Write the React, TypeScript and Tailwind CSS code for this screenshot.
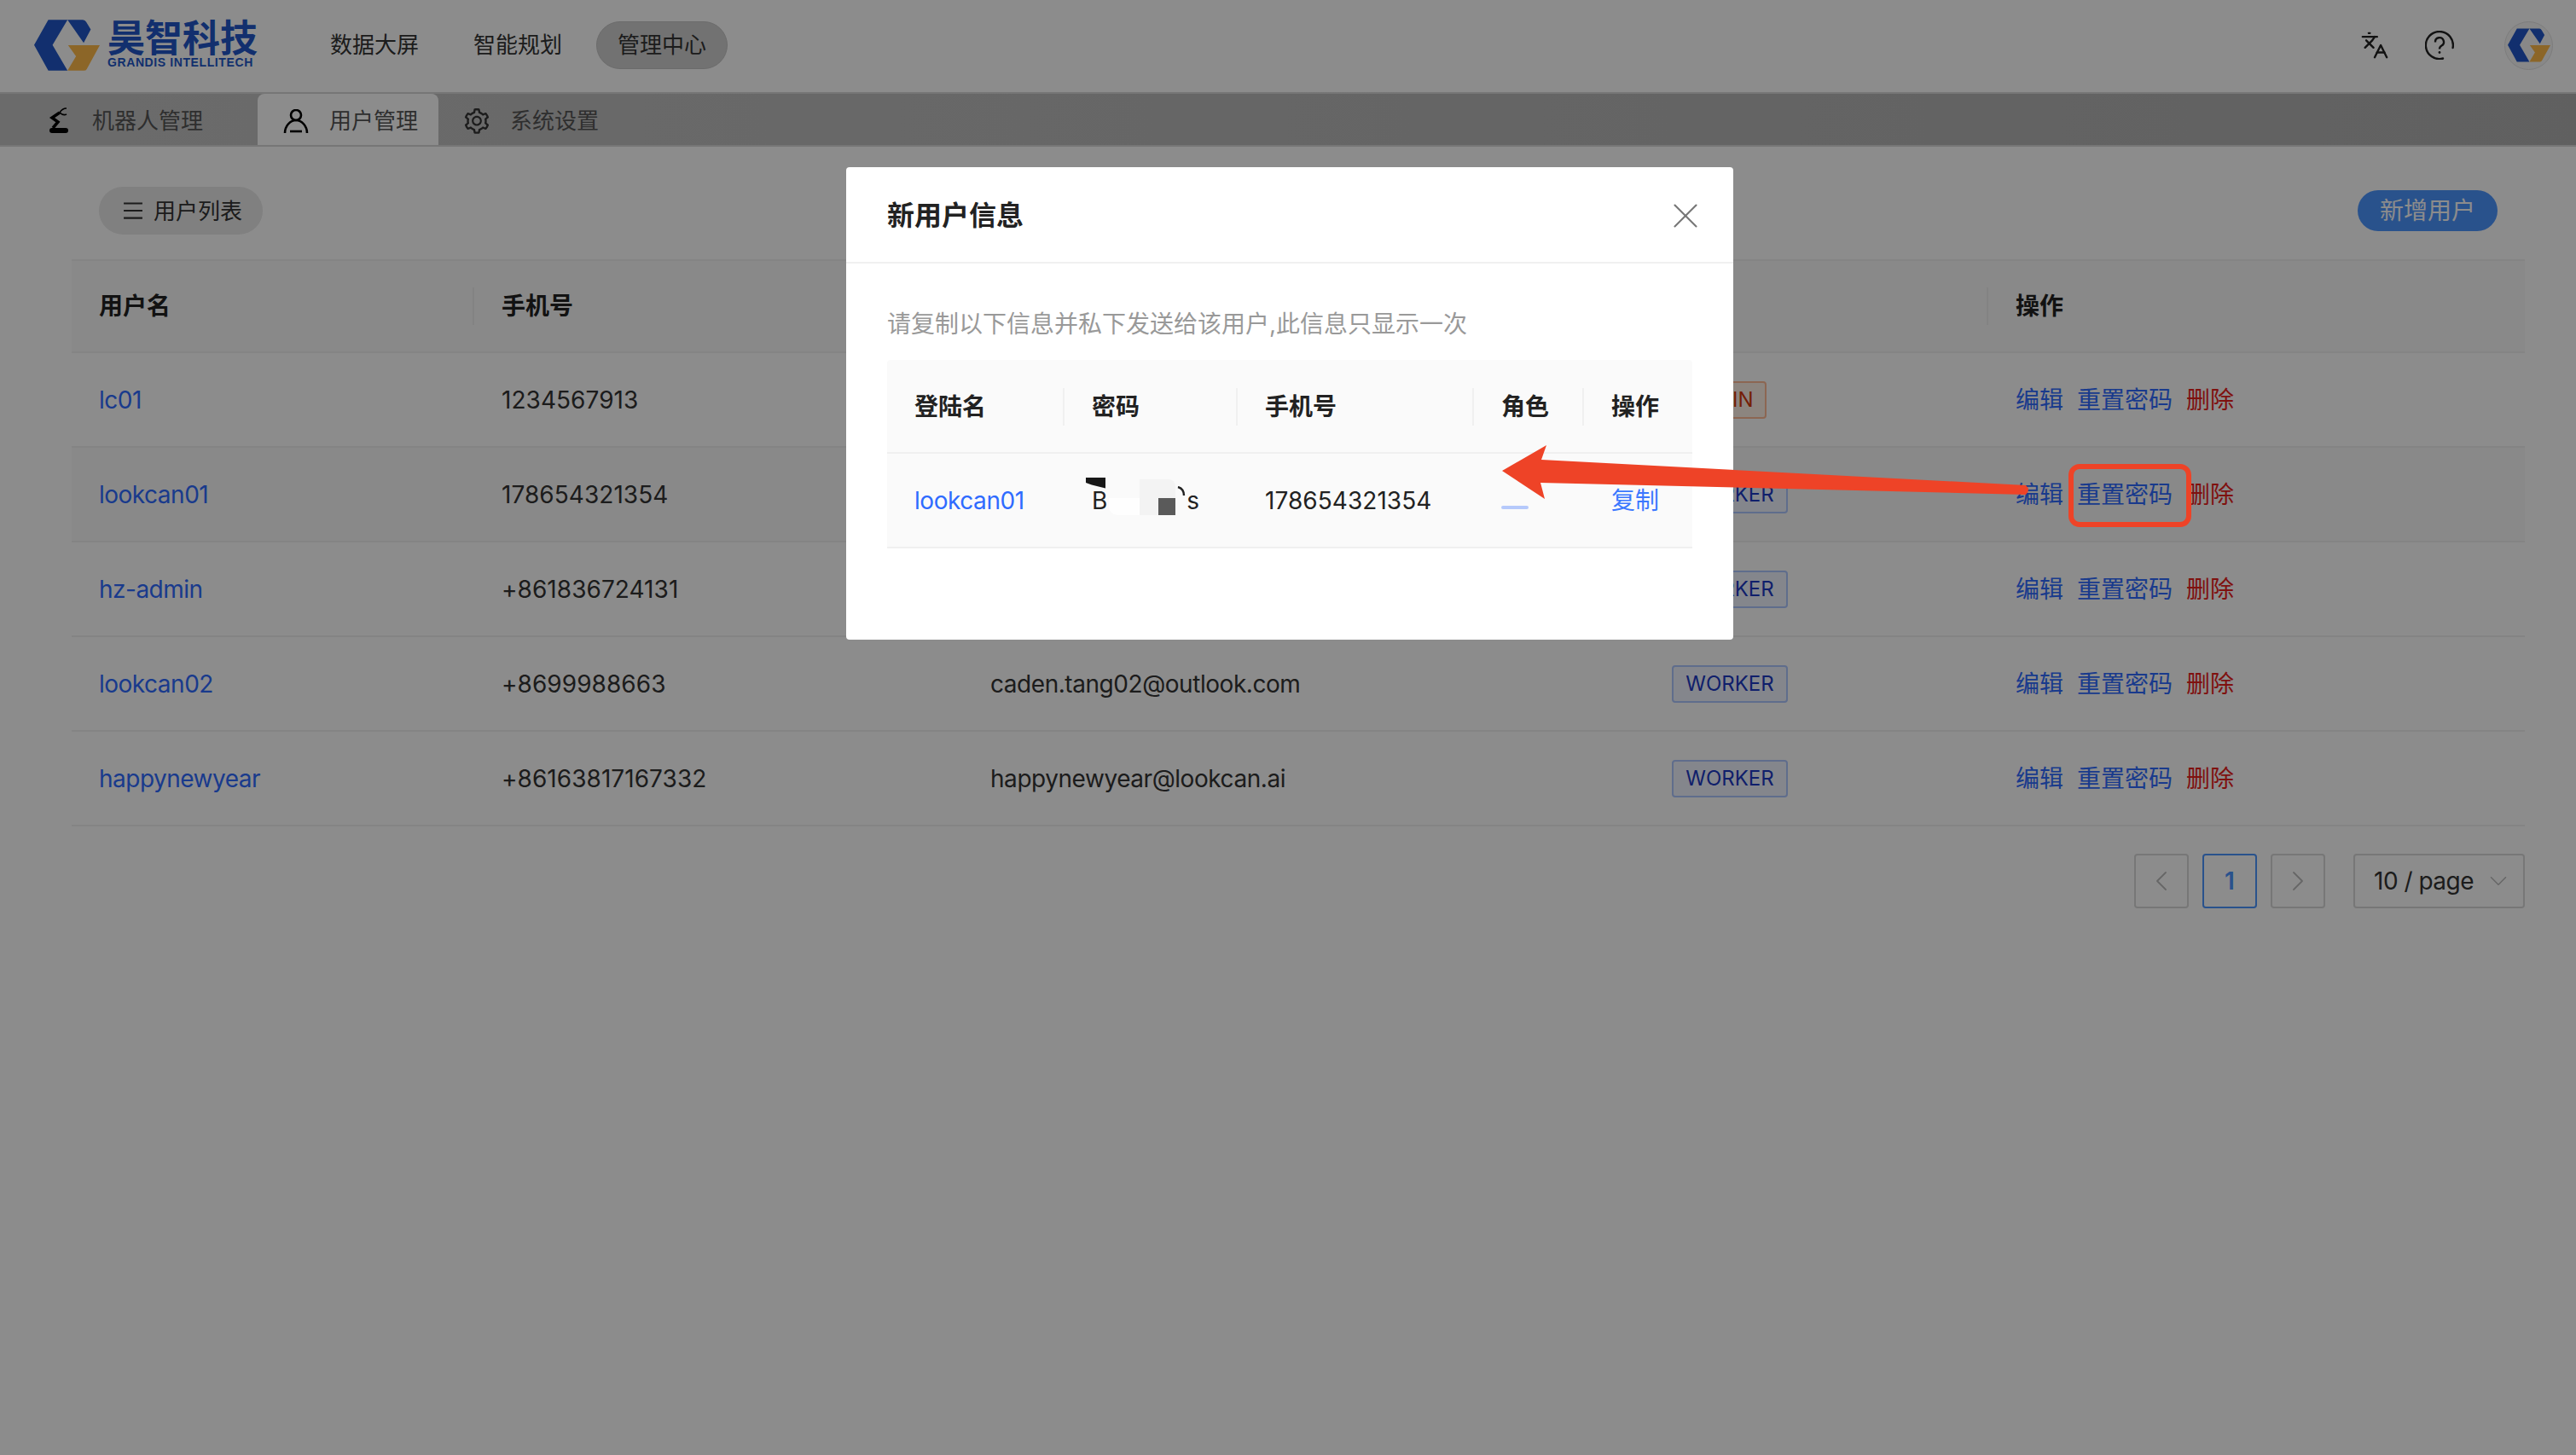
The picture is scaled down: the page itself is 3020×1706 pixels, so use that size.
import { AiOutlineMenu, AiOutlineSetting } from "react-icons/ai";
import { ChevronDown, ChevronLeft, ChevronRight, Languages, X } from "lucide-react";

const font = "font-['Inter','Noto_Sans_CJK_SC',sans-serif]";

const users = [
    { name: "lc01", phone: "1234567913", email: "lc01@lookcan.ai", role: "ADMIN" },
    { name: "lookcan01", phone: "178654321354", email: "lookcan01@lookcan.ai", role: "WORKER" },
    { name: "hz-admin", phone: "+861836724131", email: "hz-admin@lookcan.ai", role: "WORKER" },
    { name: "lookcan02", phone: "+8699988663", email: "caden.tang02@outlook.com", role: "WORKER" },
    { name: "happynewyear", phone: "+86163817167332", email: "happynewyear@lookcan.ai", role: "WORKER" },
];

function LogoMark({ className }: { className?: string }) {
    return (
        <svg viewBox="0 0 232 180" className={className}>
            <path d="M50 0H118L65 89L118 180H50L0 89Z" fill="#2157c8" />
            <path d="M118 0H172Q180 0 184 8L200 34L175 82Z" fill="#2157c8" />
            <path d="M120 90H232L186 174Q183 180 176 180H118L148 129Z" fill="#ffbb49" />
        </svg>
    );
}

function RobotIcon() {
    return (
        <svg viewBox="0 0 24 32" className="w-[24px] h-[32px]" fill="none" stroke="#000">
            <rect x="1" y="24" width="22" height="6" rx="3" fill="#000" stroke="none" />
            <path d="M5 24L11 17L4 12L13 6" strokeWidth="3.5" />
            <path d="M13 6Q16 1 21 1M13 6Q17 10 21 8" strokeWidth="1.6" />
        </svg>
    );
}

function UserIcon() {
    return (
        <svg viewBox="0 0 30 28" className="w-[30px] h-[28px]" fill="none" stroke="#000" strokeWidth="2.6">
            <ellipse cx="15" cy="7" rx="6" ry="6" />
            <path d="M2 28C2 20 8 13 15 13C22 13 28 20 28 28" />
            <path d="M8 26H22" />
        </svg>
    );
}

function HelpIcon() {
    return (
        <svg viewBox="0 0 34 34" className="w-[34px] h-[34px]" fill="none" stroke="#222" strokeWidth="2.4">
            <path d="M32.6 20A16 16 0 1 0 21 32.5" strokeLinecap="round" />
            <path d="M12 13.5A5 5 0 1 1 19.5 17.5Q17 19 17 21.5" />
            <circle cx="17" cy="25.5" r="1.4" fill="#222" stroke="none" />
        </svg>
    );
}

function RoleTag({ role }: { role: string }) {
    if (role === "ADMIN") {
        return (
            <span className="flex items-center justify-center w-[111px] h-[44px] rounded-[4px] border-2 border-[#ffbb96] bg-[#fff2e8] text-[24px] text-[#d4380d]">
                ADMIN
            </span>
        );
    }
    return (
        <span className="flex items-center justify-center w-[136px] h-[44px] rounded-[4px] border-2 border-[#adc6ff] bg-[#f0f5ff] text-[24px] text-[#1d39c4]">
            WORKER
        </span>
    );
}

function UserTable() {
    return (
        <div className="text-[28px] text-[#333]">
            <div className="grid grid-cols-[472px_573px_799px_403px_629px] h-[110px] items-center bg-[#fafafa] border-t-2 border-b-2 border-[#f0f0f0] font-semibold text-[#222]">
                {["用户名", "手机号", "邮箱", "角色", "操作"].map((title, i) => (
                    <div key={title} className={i < 4 ? "px-[32px] border-r-2 border-[#eeeeee] h-[44px] leading-[44px]" : "px-[32px] h-[44px] leading-[44px]"}>
                        {title}
                    </div>
                ))}
            </div>
            {users.map((user, i) => (
                <div
                    key={user.name}
                    className={
                        i === 1
                            ? "grid grid-cols-[472px_573px_799px_403px_629px] h-[111px] items-center border-b-2 border-[#f0f0f0] bg-[#fafafa]"
                            : "grid grid-cols-[472px_573px_799px_403px_629px] h-[111px] items-center border-b-2 border-[#f0f0f0]"
                    }
                >
                    <div className="px-[32px] text-[#2f6bff] tracking-[-0.5px]">{user.name}</div>
                    <div className="px-[32px] tracking-[0.05px]">{user.phone}</div>
                    <div className="px-[32px] tracking-[-0.45px]">{user.email}</div>
                    <div className="px-[32px]"><RoleTag role={user.role} /></div>
                    <div className="px-[32px] flex gap-[16px]">
                        <span className="text-[#2f6bff]">编辑</span>
                        <span className="text-[#2f6bff]">重置密码</span>
                        <span className="text-[#e8201a]">删除</span>
                    </div>
                </div>
            ))}
        </div>
    );
}

function Pagination() {
    return (
        <div className="flex justify-end mt-[32px] text-[28px] text-[#333]">
            <div className="flex items-center justify-center w-[64px] h-[64px] rounded-[4px] border-2 border-[#d9d9d9] text-[#bbb]">
                <ChevronLeft size={40} strokeWidth={1.1} />
            </div>
            <div className="flex items-center justify-center w-[64px] h-[64px] ml-[16px] rounded-[4px] border-2 border-[#4c95ff] text-[#4c95ff] font-semibold">
                1
            </div>
            <div className="flex items-center justify-center w-[64px] h-[64px] ml-[16px] rounded-[4px] border-2 border-[#d9d9d9] text-[#bbb]">
                <ChevronRight size={40} strokeWidth={1.1} />
            </div>
            <div className="flex items-center justify-between w-[201px] h-[64px] ml-[33px] pl-[22px] pr-[12px] rounded-[4px] border-2 border-[#d9d9d9]">
                <span className="tracking-[-0.5px]">10 / page</span>
                <ChevronDown size={34} strokeWidth={1.1} className="text-[#bbb]" />
            </div>
        </div>
    );
}

function NewUserModal() {
    const cols = "grid grid-cols-[208px_203px_277px_129px_127px]";
    return (
        <div className="absolute left-[992px] top-[196px] w-[1040px] h-[554px] rounded-[4px] bg-white text-[28px] text-[#222]">
            <div className="flex items-center justify-between h-[113px] pt-[2px] px-[48px] border-b-2 border-[#f0f0f0]">
                <span className="text-[32px] font-semibold">新用户信息</span>
                <X size={50} strokeWidth={1} className="text-[#777] -mr-[17px]" />
            </div>
            <div className="px-[48px] pt-[49px]">
                <p className="leading-[44px] text-[#999]">请复制以下信息并私下发送给该用户,此信息只显示一次</p>
                <div className="mt-[20px] bg-[#fafafa] rounded-t-[4px]">
                    <div className={`${cols} h-[110px] pt-[1px] items-center border-b-2 border-[#f0f0f0] font-semibold`}>
                        {["登陆名", "密码", "手机号", "角色", "操作"].map((title, i) => (
                            <div key={title} className={i < 4 ? "px-[32px] border-r-2 border-[#f0f0f0] h-[44px] leading-[44px]" : "px-[32px] h-[44px] leading-[44px]"}>
                                {title}
                            </div>
                        ))}
                    </div>
                    <div className={`${cols} h-[111px] items-center border-b-2 border-[#f0f0f0]`}>
                        <div className="px-[32px] text-[#2f6bff] tracking-[-0.45px]">lookcan01</div>
                        <div className="relative px-[32px] flex">
                            <span>B</span>
                            <span className="ml-[93px]">s</span>
                            {/* redaction blocks left in the screenshot */}
                            <div className="absolute left-[25px] top-[-6px] w-[23px] h-[13px] bg-[#171717] [clip-path:polygon(0_0,100%_0,100%_100%,30%_70%,0_50%)]" />
                            <div className="absolute left-[52px] top-[18px] w-[36px] h-[20px] rounded-bl-[10px] bg-white/70" />
                            <div className="absolute left-[88px] top-[-4px] w-[42px] h-[42px] rounded-tr-[8px] bg-[#f3f3f3]" />
                            <div className="absolute left-[110px] top-[18px] w-[20px] h-[20px] bg-[#5a5a5a]" />
                            <svg className="absolute left-[132px] top-[4px]" width="10" height="12" viewBox="0 0 10 12" fill="none">
                                <path d="M1 1Q8 3 8 11" stroke="#222" strokeWidth="2.4" />
                            </svg>
                        </div>
                        <div className="px-[32px] tracking-[0.05px]">178654321354</div>
                        <div className="px-[32px]">
                            <div className="w-[32px] h-[4px] mt-[16px] rounded-full bg-[#b5c9fb]" />
                        </div>
                        <div className="px-[32px] text-[#3b78ff]">复制</div>
                    </div>
                </div>
            </div>
        </div>
    );
}

export default function App() {
    return (
        <div className={`relative w-[3020px] h-[1706px] overflow-hidden bg-white ${font}`}>
            <header className="flex items-center h-[110px] border-b-2 border-[#d8d8d8] pl-[40px] pr-[27px]">
                <LogoMark className="w-[77px] h-[60px] mb-[3px]" />
                <div className="ml-[9px] flex flex-col mb-[4px]">
                    <span className="text-[44px] leading-[42px] font-bold text-[#2157c8]">昊智科技</span>
                    <span className="text-[14px] leading-[14px] font-bold tracking-[0.6px] text-[#2157c8] font-['Liberation_Sans',sans-serif]">GRANDIS INTELLITECH</span>
                </div>
                <nav className="flex items-center ml-[85px] mb-[3px] text-[26px] text-[#333]">
                    <span>数据大屏</span>
                    <span className="ml-[64px]">智能规划</span>
                    <span className="flex items-center h-[56px] ml-[40px] px-[24px] rounded-full bg-[#d0d0d0] border border-[#c4c4c4]">管理中心</span>
                </nav>
                <div className="ml-auto flex items-center mb-[2px]">
                    <Languages size={34} strokeWidth={1.7} className="text-[#222]" />
                    <div className="ml-[42px]"><HelpIcon /></div>
                    <div className="flex items-center justify-center ml-[59px] w-[57px] h-[57px] rounded-full bg-[#f7f7f7] border border-[#e4e4e4]">
                        <LogoMark className="w-[50px] h-[40px]" />
                    </div>
                </div>
            </header>

            <div className="flex h-[62px] pt-[3px] bg-gradient-to-r from-[#c4c4c4] to-[#b0b0b0] border-b-2 border-[#d8d8d8] text-[26px] text-[#555]">
                <div className="flex items-center w-[302px] pl-[57px] gap-[27px]">
                    <RobotIcon />
                    <span>机器人管理</span>
                </div>
                <div className="flex items-center w-[212px] -mt-[3px] pt-[3px] pl-[30px] gap-[24px] bg-white rounded-t-[8px]">
                    <UserIcon />
                    <span>用户管理</span>
                </div>
                <div className="flex items-center pl-[28px] gap-[22px]">
                    <AiOutlineSetting size={34} className="text-[#333]" />
                    <span>系统设置</span>
                </div>
            </div>

            <main className="pl-[84px] pr-[60px]">
                <div className="flex items-center justify-between h-[132px] pt-[18px] pl-[32px] pr-[32px]">
                    <div className="flex items-center h-[56px] pl-[26px] pr-[24px] gap-[10px] rounded-full bg-[#e9e9e9] text-[26px] text-[#333]">
                        <AiOutlineMenu size={28} />
                        <span>用户列表</span>
                    </div>
                    <div className="flex items-center justify-center w-[164px] h-[48px] rounded-full bg-[#4c95ff] text-[28px] text-white">
                        新增用户
                    </div>
                </div>
                <UserTable />
                <Pagination />
            </main>

            {/* modal mask */}
            <div className="absolute inset-0 bg-black/45" />
            <NewUserModal />

            {/* annotation drawn on top of the screenshot */}
            <svg className="absolute inset-0" width="3020" height="1706" viewBox="0 0 3020 1706" fill="none">
                <path d="M1761 552L1813 522L1807 539L2375 569Q2381 574 2375 580L1806 566L1811 585Z" fill="#ee4327" />
                <rect x="2428" y="547" width="138" height="68" rx="10" stroke="#ee4327" strokeWidth="6" />
            </svg>
        </div>
    );
}
